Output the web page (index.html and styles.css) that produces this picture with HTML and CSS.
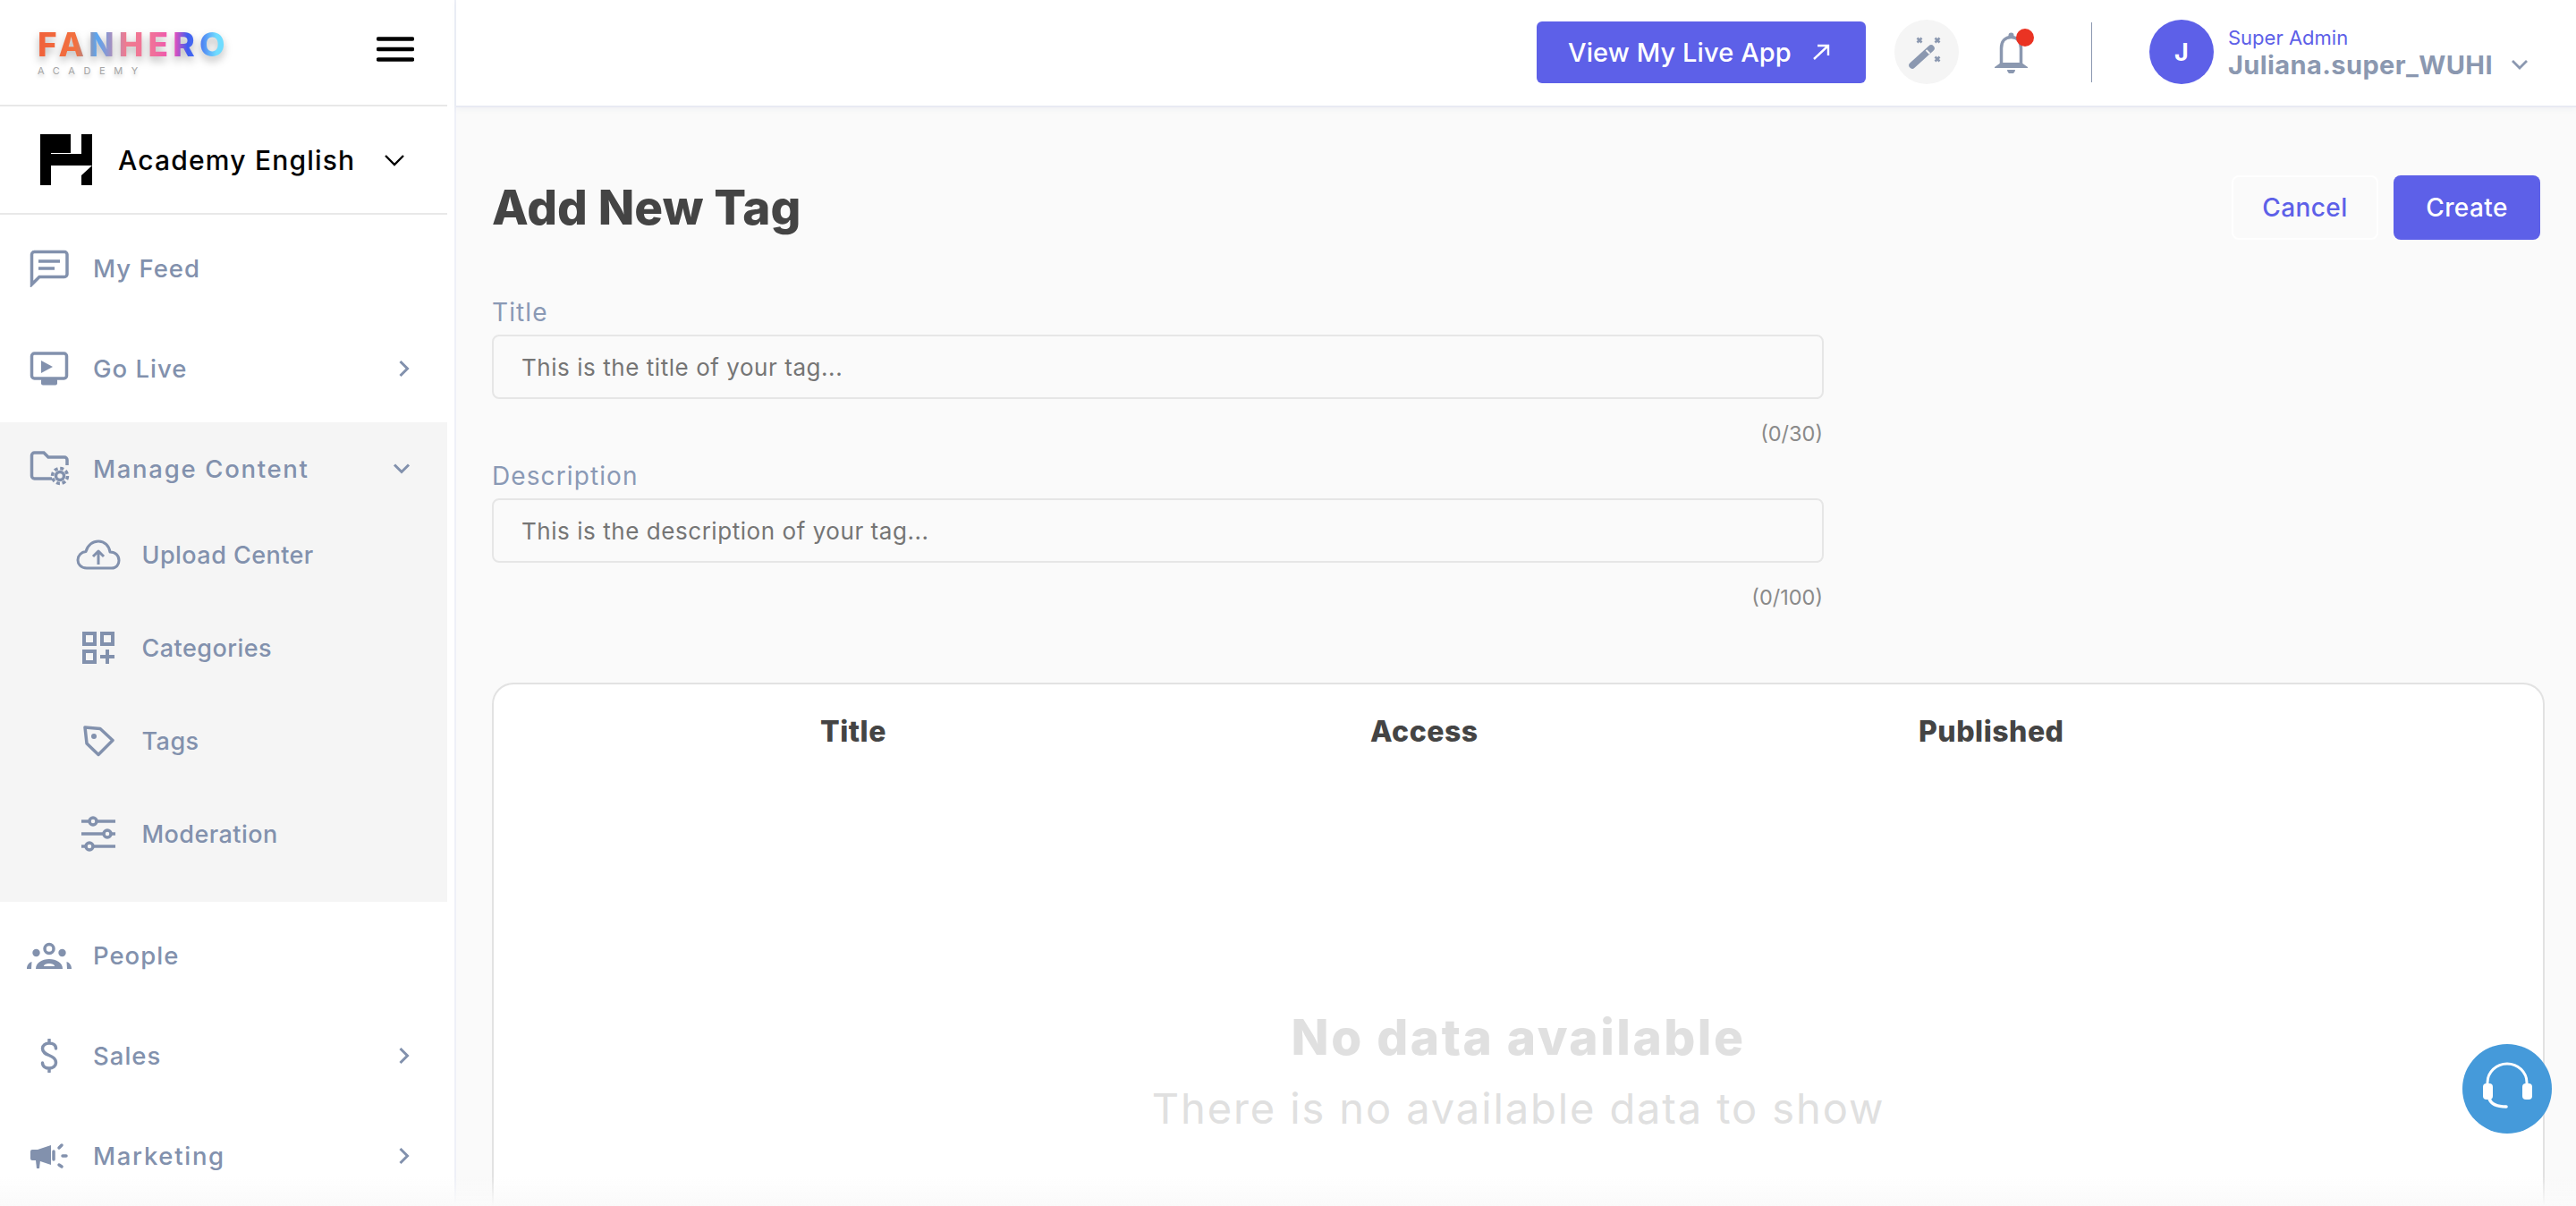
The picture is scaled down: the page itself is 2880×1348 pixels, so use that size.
FILE: index.html
```html
<!DOCTYPE html>
<html>
<head>
  <title>Add New Tag</title>
  <link rel="stylesheet" href="styles.css">
</head>
<body>
<div class="app">
  <aside class="sidebar">
    <div class="logo-row">
      <div class="logo">
        <div class="logo-name">FANHERO</div>
        <div class="logo-sub">ACADEMY</div>
      </div>
      <svg class="burger" width="42" height="28" viewBox="0 0 42 28"><path d="M2 2.5h38M2 14h38M2 25.5h38" stroke="#000" stroke-width="4.6" stroke-linecap="round"/></svg>
    </div>
    <div class="app-row">
      <svg class="app-mark" width="58" height="57" viewBox="0 0 58 57"><path d="M0 0H34V21H12V22H46V0H58V35H12V57H0Z" fill="#000"/><path d="M46 46L58 35V57H46Z" fill="#000"/></svg>
      <span class="app-name">Academy English</span>
      <svg class="app-chev" width="24" height="14" viewBox="0 0 24 14"><path d="M2 2l10 10L22 2" fill="none" stroke="#000" stroke-width="2.4"/></svg>
    </div>
    <nav class="nav">
      <a class="item">
        <span class="ico"><svg width="50" height="42" viewBox="0 0 50 42"><path d="M8 2.5h34a3 3 0 0 1 3 3v22a3 3 0 0 1-3 3H14l-8.500 8.500V5.500a3 3 0 0 1 3-3z" class="ln"/><path d="M13 13h24M13 21h18" class="ln"/></svg></span>
        My Feed
      </a>
      <a class="item">
        <span class="ico"><svg width="50" height="38" viewBox="0 0 50 38"><rect x="5.500" y="2" width="39" height="28" rx="3" class="ln"/><path d="M16 10l13 7-13 7z" class="fl"/><rect x="16" y="30" width="18" height="7.500" rx="2" class="fl"/></svg></span>
        Go Live
        <svg class="chev" width="14" height="20" viewBox="0 0 14 20"><path d="M2.500 2l8 8-8 8" class="ln2"/></svg>
      </a>
      <div class="group">
        <a class="item item-open item-wide">
          <span class="ico"><svg width="50" height="40" viewBox="0 0 50 40"><path d="M28 31H8.500a3 3 0 0 1-3-3V5a3 3 0 0 1 3-3H19l5 5h18a3 3 0 0 1 3 3v6" class="ln"/><circle cx="37" cy="28" r="4.500" class="ln"/><circle cx="37" cy="28" r="8.500" fill="none" stroke="#8291ad" stroke-width="3.500" stroke-dasharray="4 2.670"/></svg></span>
          Manage Content
          <svg class="chev" width="20" height="14" viewBox="0 0 20 14"><path d="M2 2.500l8 8 8-8" class="ln2"/></svg>
        </a>
        <a class="sub">
          <span class="ico"><svg width="50" height="34" viewBox="0 0 50 34"><path d="M12 32C5 32 2 27 2 23c0-5 4-9 9-9.500C13 6 19 2 25 2c7 0 12 5 13 12 6 0 10 4 10 9.500C48 28 45 32 40 32z" class="ln3"/><path d="M25 28V13M19 19l6-6 6 6" class="ln3"/></svg></span>
          Upload Center
        </a>
        <a class="sub">
          <span class="ico"><svg width="36" height="36" viewBox="0 0 36 36"><path d="M2 2h12v12H2zM22 2h12v12H22zM2 22h12v12H2z" fill="none" stroke="#8291ad" stroke-width="4"/><path d="M28 20v16M20 28h16" fill="none" stroke="#8291ad" stroke-width="4"/></svg></span>
          Categories
        </a>
        <a class="sub">
          <span class="ico"><svg width="36" height="36" viewBox="0 0 36 36"><path d="M3 3l17 1.500 14 13-16 16L5 21z" class="ln" stroke-linejoin="round"/><circle cx="13" cy="13" r="3" class="fl"/></svg></span>
          Tags
        </a>
        <a class="sub">
          <span class="ico"><svg width="40" height="40" viewBox="0 0 40 40"><path d="M1 6h38M1 20h38M1 34h38" class="ln"/><circle cx="14" cy="6" r="4" class="knob"/><circle cx="30" cy="20" r="4" class="knob"/><circle cx="10" cy="34" r="4" class="knob"/></svg></span>
          Moderation
        </a>
      </div>
      <a class="item">
        <span class="ico"><svg width="50" height="30" viewBox="0 0 50 30"><circle cx="25" cy="7.500" r="5" class="ln"/><circle cx="10.500" cy="12" r="4.200" class="fl"/><circle cx="39.500" cy="12" r="4.200" class="fl"/><path d="M10 30c0-7 7-11 15-11s15 4 15 11z" class="fl"/><path d="M19 27c0-2 3-3 6-3s6 1 6 3z" fill="#fff"/><path d="M0 30c0-4 2-7 5.500-8L5 30zM50 30c0-4-2-7-5.500-8l.5 8z" class="fl"/></svg></span>
        People
      </a>
      <a class="item">
        <span class="ico"><svg width="20" height="38" viewBox="0 0 20 38"><path d="M17.500 11c0-4-3.500-6-7.500-6S2.500 7.500 2.500 11c0 9 15 6 15 16 0 3.500-3.500 6-7.500 6s-7.500-2-7.500-6M10 1v4M10 33v4" class="ln" stroke-linecap="round"/></svg></span>
        Sales
        <svg class="chev" width="14" height="20" viewBox="0 0 14 20"><path d="M2.500 2l8 8-8 8" class="ln2"/></svg>
      </a>
      <a class="item item-wide">
        <span class="ico"><svg width="42" height="32" viewBox="0 0 42 32"><path d="M0 11q0-2 2-2h6l15-5v22L8 21H2q-2 0-2-2z" class="fl"/><path d="M6 21h5l-1 9H7z" class="fl"/><path d="M26 11v9M32 7l3-3M36 16h4M32 26l3 2" class="ln" stroke-linecap="round"/></svg></span>
        Marketing
        <svg class="chev" width="14" height="20" viewBox="0 0 14 20"><path d="M2.500 2l8 8-8 8" class="ln2"/></svg>
      </a>
    </nav>
  </aside>

  <div class="main">
    <header class="topbar">
      <a class="live-btn">View My Live App
        <svg width="20" height="18" viewBox="0 0 20 18"><path d="M2 17L18 2M6 2h12v11" fill="none" stroke="#fff" stroke-width="2.400"/></svg>
      </a>
      <span class="wand">
        <svg width="72" height="72" viewBox="0 0 72 72"><path d="M20 51l21-19" stroke="#8b98b0" stroke-width="7.500" stroke-linecap="round"/><path d="M35.500 34l4 4" stroke="#f5f5f5" stroke-width="2"/><path d="M25.500 20.500l5 5M30.500 20.500l-5 5M45.500 20.500l5 5M50.500 20.500l-5 5M45.500 41.500l5 5M50.500 41.500l-5 5" stroke="#8b98b0" stroke-width="2.600"/></svg>
      </span>
      <span class="bell">
        <svg width="40" height="46" viewBox="0 0 40 46"><circle cx="20.500" cy="3.500" r="3" fill="#8b98b0"/><path d="M9.500 37V18c0-8 4.500-12.500 11-12.500S31.500 10 31.500 18v19" fill="none" stroke="#8b98b0" stroke-width="3.500"/><path d="M9 34l-7 5v1h37v-1l-7-5z" fill="#8b98b0"/><path d="M16 42h9a4.500 4.500 0 0 1-9 0z" fill="#8b98b0"/></svg>
        <i class="dot"></i>
      </span>
      <span class="divider"></span>
      <span class="avatar">J</span>
      <div class="user">
        <div class="role">Super Admin</div>
        <div class="uname">Juliana.super_WUHI</div>
      </div>
      <svg class="user-chev" width="20" height="13" viewBox="0 0 20 13"><path d="M2 2l8 8 8-8" fill="none" stroke="#8b98b0" stroke-width="2.800"/></svg>
    </header>

    <div class="content">
      <div class="page-head">
        <h1>Add New Tag</h1>
        <div class="actions">
          <a class="btn btn-cancel">Cancel</a>
          <a class="btn btn-create">Create</a>
        </div>
      </div>

      <div class="field">
        <label>Title</label>
        <input type="text" placeholder="This is the title of your tag...">
        <div class="count">(0/30)</div>
      </div>
      <div class="field">
        <label>Description</label>
        <input type="text" placeholder="This is the description of your tag...">
        <div class="count">(0/100)</div>
      </div>

      <div class="card">
        <div class="card-head">
          <span>Title</span>
          <span>Access</span>
          <span>Published</span>
        </div>
        <div class="empty">
          <div class="empty-title">No data available</div>
          <div class="empty-text">There is no available data to show</div>
        </div>
      </div>
    </div>
  </div>
</div>

<a class="help">
  <svg width="100" height="100" viewBox="0 0 100 100"><path d="M28 46v-3a22 21 0 0 1 44 0v3" fill="none" stroke="#fff" stroke-width="3"/><rect x="23" y="44" width="11" height="18" rx="4" fill="#fff"/><rect x="67" y="44" width="11" height="18" rx="4" fill="#fff"/><path d="M30 61c2 6 8 9 19 9" fill="none" stroke="#fff" stroke-width="3.600" stroke-linecap="round"/></svg>
</a>
<div class="fade"></div>
</body>
</html>
```

FILE: styles.css
```css
* {
    box-sizing: border-box;
}

html, body {
    margin: 0;
    height: 100%;
    overflow: hidden;
}

body {
    font-family: Inter, "Open Sans", sans-serif;
    color: #444444;
    background: #fafafa;
}

.app {
    display: flex;
    height: 1348px;
}

/* sidebar */
.sidebar {
    width: 510px;
    flex: none;
    background: #ffffff;
    border-right: 2px solid #eef0f7;
    padding-right: 8px;
}

.logo-row {
    height: 119px;
    display: flex;
    align-items: center;
    justify-content: space-between;
    padding: 0 37px 0 42px;
    border-bottom: 2px solid #e8e8e8;
}

.logo {
    margin-top: 2px;
}

.logo-name {
    font-size: 37px;
    line-height: 30px;
    font-weight: 800;
    letter-spacing: 5.2px;
    background: linear-gradient(90deg, #f0613a 0, #f2703f 20%, #58a6f2 31%, #f07a8f 46%, #f0709a 60%, #ee4fb8 71%, #3f5df0 78%, #4d7ef2 85%, #6fdcff 93%);
    -webkit-background-clip: text;
    background-clip: text;
    color: transparent;
    filter: drop-shadow(0 5px 5px rgba(0, 0, 0, 0.28));
}

.logo-sub {
    margin-top: 8px;
    font-size: 11px;
    line-height: 12px;
    letter-spacing: 9.6px;
    color: #a6a6a6;
    text-shadow: 0 3px 4px rgba(0, 0, 0, 0.2);
}

.burger {
    margin-top: -8px;
}

.app-row {
    height: 121px;
    display: flex;
    align-items: center;
    padding: 0 47px 0 45px;
    border-bottom: 2px solid #e8e8e8;
}

.app-name {
    margin-left: 29px;
    font-size: 30px;
    font-weight: 500;
    letter-spacing: 1.2px;
    color: #000000;
    white-space: nowrap;
}

.app-chev {
    margin-left: auto;
}

.nav {
    padding-top: 4px;
}

.item, .sub {
    display: flex;
    align-items: center;
    font-weight: 500;
    color: #8291ad;
}

.item {
    height: 112px;
    padding: 0 41px 0 30px;
    font-size: 27.5px;
    letter-spacing: 1px;
}

.item-wide {
    letter-spacing: 1.7px;
}

.sub {
    height: 104px;
    padding-left: 85px;
    font-size: 27px;
    letter-spacing: 0.45px;
}

.ico {
    width: 50px;
    flex: none;
    display: flex;
    justify-content: center;
    margin-right: 24px;
}

.ico svg {
    display: block;
}

.chev {
    margin-left: auto;
}

.group {
    margin: 4px 0;
    padding-bottom: 24px;
    background: #f5f5f5;
}

.item-open {
    height: 96px;
    padding-top: 8px;
}

.sub .ico {
    margin-right: 23.5px;
}

.ln {
    fill: none;
    stroke: #8291ad;
    stroke-width: 3.5;
}

.ln2 {
    fill: none;
    stroke: #8291ad;
    stroke-width: 3;
}

.ln3 {
    fill: none;
    stroke: #8291ad;
    stroke-width: 3;
    stroke-linejoin: round;
}

.fl {
    fill: #8291ad;
}

.knob {
    fill: #f5f5f5;
    stroke: #8291ad;
    stroke-width: 3.5;
}

/* top bar */
.main {
    flex: 1;
    min-width: 0;
}

.topbar {
    height: 120px;
    display: flex;
    align-items: center;
    padding-bottom: 2px;
    padding-left: 1208px;
    background: #ffffff;
    border-bottom: 2px solid #e8eaf3;
    box-shadow: 0 2px 6px rgba(120, 125, 170, 0.08);
}

.live-btn {
    width: 368px;
    height: 69px;
    display: flex;
    align-items: center;
    justify-content: space-between;
    padding: 0 40px 0 35px;
    background: #5d60e8;
    border-radius: 6px;
    color: #ffffff;
    font-size: 29px;
    font-weight: 500;
    letter-spacing: 0.1px;
    white-space: nowrap;
}

.wand {
    width: 72px;
    height: 72px;
    margin-left: 32px;
    border-radius: 50%;
    background: #f5f5f5;
}

.wand svg {
    display: block;
}

.bell {
    position: relative;
    width: 40px;
    height: 46px;
    margin-left: 38px;
    margin-top: 2px;
}

.bell svg {
    display: block;
}

.dot {
    position: absolute;
    top: -4px;
    left: 26px;
    width: 20px;
    height: 20px;
    border-radius: 50%;
    background: #ea3323;
}

.divider {
    width: 1px;
    height: 67px;
    margin-left: 70px;
    background: #8b98b0;
}

.avatar {
    width: 72px;
    height: 72px;
    margin-left: 64px;
    display: flex;
    align-items: center;
    justify-content: center;
    border-radius: 50%;
    background: #5d60e8;
    color: #ffffff;
    font-size: 27px;
    font-weight: 700;
}

.user {
    margin-left: 16px;
    white-space: nowrap;
}

.role {
    margin-top: 2px;
    font-size: 22px;
    line-height: 26px;
    color: #5d60e8;
}

.uname {
    margin-top: 2px;
    font-size: 29px;
    line-height: 32px;
    font-weight: 700;
    letter-spacing: 0.4px;
    color: #8b98b0;
}

.user-chev {
    margin-left: 20px;
    margin-top: 28px;
}

/* content */
.content {
    padding: 76px 35px 0 40px;
}

.page-head {
    display: flex;
    align-items: center;
    justify-content: space-between;
    height: 72px;
    padding-right: 5px;
    margin-bottom: 63px;
}

h1 {
    margin: 0;
    font-size: 53px;
    font-weight: 800;
    letter-spacing: 0.1px;
    color: #444444;
}

.actions {
    display: flex;
    gap: 17px;
}

.btn {
    width: 164px;
    height: 72px;
    display: flex;
    align-items: center;
    justify-content: center;
    border-radius: 8px;
    font-size: 28px;
    font-weight: 500;
    letter-spacing: 0.4px;
}

.btn-cancel {
    border: 2px solid #ffffff;
    color: #5d60e8;
}

.btn-create {
    background: #5d60e8;
    color: #ffffff;
}

.field {
    width: 1489px;
    margin-bottom: 14px;
}

.field label {
    display: block;
    height: 36px;
    margin-bottom: 7px;
    font-size: 28px;
    line-height: 37px;
    letter-spacing: 1.1px;
    color: #8a99b5;
}

.field input {
    display: block;
    width: 100%;
    height: 72px;
    padding: 0 31px;
    background: transparent;
    border: 2px solid #e6e6e6;
    border-radius: 8px;
    font-family: Inter, sans-serif;
    font-size: 26px;
    letter-spacing: 0.55px;
}

.field input::placeholder {
    color: #757575;
    opacity: 1;
}

.count {
    height: 30px;
    margin-top: 24px;
    padding-right: 1px;
    text-align: right;
    font-size: 23.5px;
    line-height: 30px;
    color: #8a8a8a;
}

.card {
    height: 585px;
    margin-top: 80px;
    background: #ffffff;
    border: 2px solid #e2e2e2;
    border-bottom: 0;
    border-radius: 24px 24px 0 0;
}

.card-head {
    display: grid;
    grid-template-columns: 615px 613px 1fr;
    padding: 35px 0 0 365px;
    font-size: 32px;
    line-height: 36px;
    font-weight: 800;
    letter-spacing: 0.5px;
    color: #444444;
}

.empty {
    margin-top: 287px;
    text-align: center;
    white-space: nowrap;
}

.empty-title {
    font-size: 55px;
    line-height: 72px;
    font-weight: 800;
    letter-spacing: 2.5px;
    color: #e0e0e0;
}

.empty-text {
    margin-top: 14px;
    font-size: 47px;
    line-height: 60px;
    letter-spacing: 1.9px;
    color: #e0e0e0;
}

/* overlays */
.help {
    position: fixed;
    left: 2753px;
    top: 1167px;
    width: 100px;
    height: 100px;
    border-radius: 50%;
    background: #459ada;
}

.help svg {
    display: block;
}

.fade {
    position: fixed;
    left: 0;
    right: 0;
    bottom: 0;
    height: 34px;
    background: linear-gradient(rgba(250, 250, 250, 0), #fafafa);
    pointer-events: none;
}
```
